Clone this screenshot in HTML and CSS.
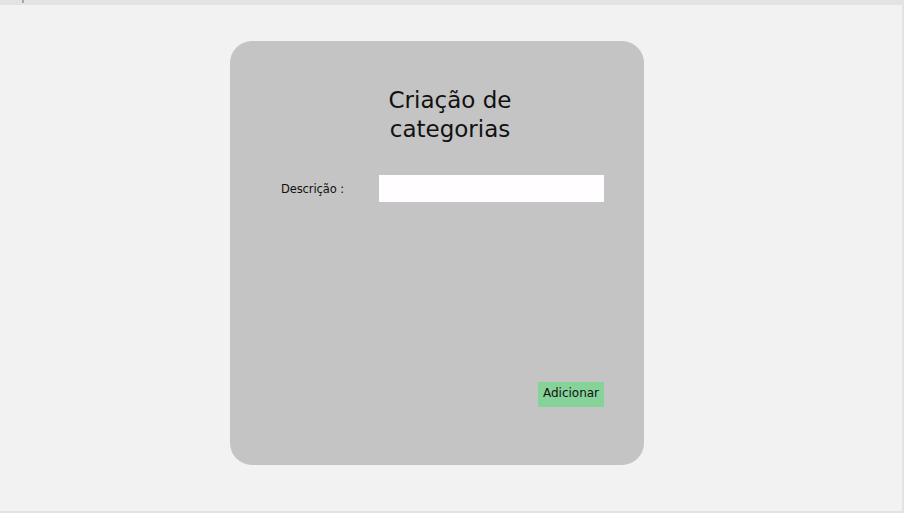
FILE: index.html
```
<!DOCTYPE html>
<html lang="pt">
<head>
<meta charset="utf-8">
<title>Criação de categorias</title>
<link rel="stylesheet" href="styles.css">
</head>
<body>
<div class="topbar"><span class="mark"></span></div>
<main class="page">
  <section class="card">
    <h1 class="title">Criação de<br>categorias</h1>
    <div class="field">
      <label class="label" for="desc">Descrição :</label>
      <input class="input" id="desc" type="text">
    </div>
    <div class="actions">
      <button class="btn" type="button">Adicionar</button>
    </div>
  </section>
</main>
</body>
</html>
```
FILE: styles.css
```
html, body {
  margin: 0;
  padding: 0;
}
body {
  width: 904px;
  height: 513px;
  background: #e3e3e3;
  font-family: "DejaVu Sans", "Noto Sans", sans-serif;
  overflow: hidden;
}
.topbar {
  height: 5px;
  position: relative;
}
.mark {
  position: absolute;
  left: 22px;
  top: 0;
  width: 2px;
  height: 3px;
  background: #a8a8a8;
}
.page {
  width: 902px;
  height: 506px;
  background: #f2f2f2;
  padding: 36px 0 0 230px;
  box-sizing: border-box;
}
.card {
  width: 414px;
  height: 424px;
  background: #c4c4c4;
  border-radius: 22px;
  box-sizing: border-box;
  padding: 45px 40px 0 51px;
  display: flex;
  flex-direction: column;
}
.title {
  margin: 0 0 0 63px;
  width: 212px;
  font-weight: 400;
  font-size: 23px;
  line-height: 29px;
  text-align: center;
  color: #111;
}
.field {
  margin-top: 31px;
  display: flex;
  align-items: center;
  justify-content: space-between;
}
.label {
  font-size: 11.5px;
  letter-spacing: -0.1px;
  color: #111;
}
.input {
  width: 225px;
  height: 27px;
  border: none;
  margin: 0;
  padding: 0;
  background: #fffdff;
  box-sizing: border-box;
}
.actions {
  margin-top: 180px;
  display: flex;
  justify-content: flex-end;
}
.btn {
  width: 66px;
  height: 25px;
  border: none;
  padding: 0 0 4px;
  background: #86d39a;
  font-family: "DejaVu Sans", "Noto Sans", sans-serif;
  font-size: 12px;
  color: #111;
}
```
